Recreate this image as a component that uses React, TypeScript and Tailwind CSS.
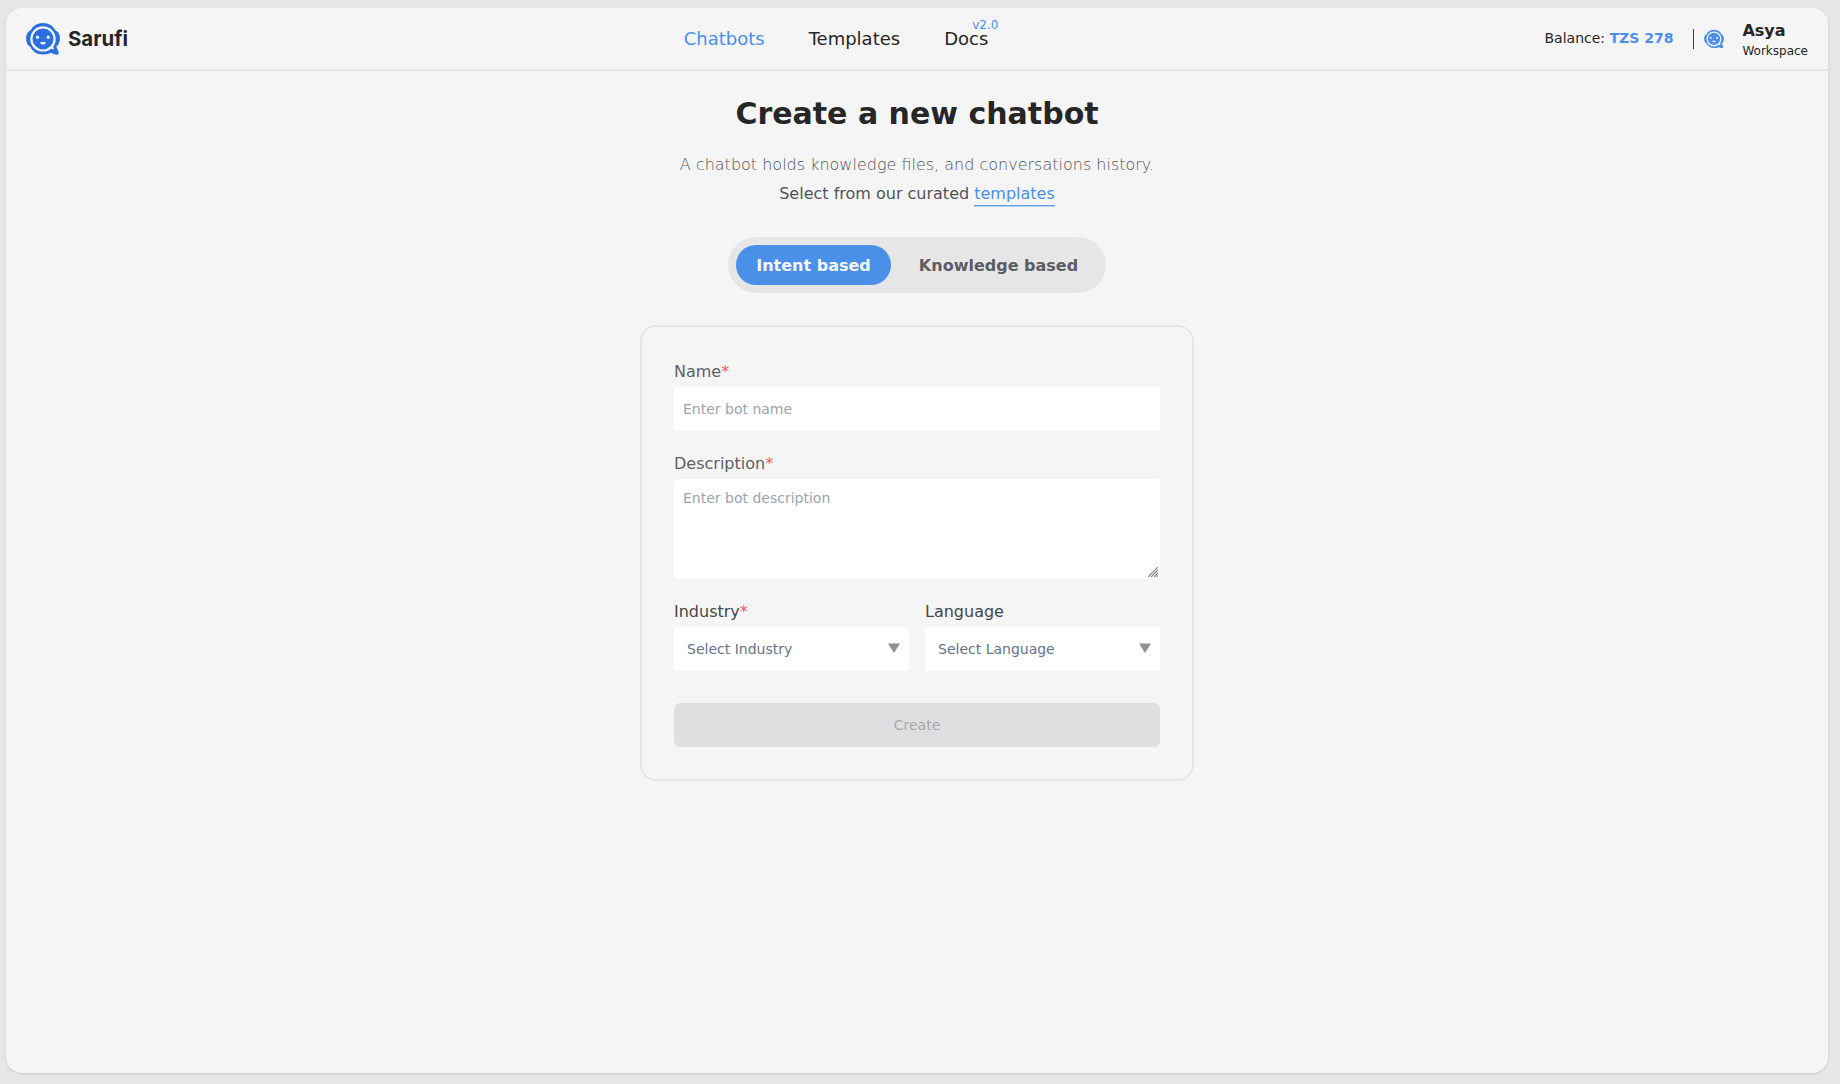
import React from 'react';

function BotLogo({ className }: { className: string }) {
  return (
    <svg viewBox="0 0 34 32" className={className} fill="none">
      <path
        d="M17 1.500C11.600 1.500 7.500 4.300 5.300 8.600C2.700 9.600 1.500 11.400 1.500 15.600C1.500 19.900 2.700 21.600 5.300 22.800C7.500 27.300 11.600 30.100 17 30.100C20.200 30.100 22.800 29.400 24.900 28.200C27 29.700 29.200 30.400 31.400 30.200C31 28.200 29.600 26 28.700 22.800C31.300 21.600 32.500 19.900 32.500 15.600C32.500 11.400 31.300 9.600 28.700 8.600C26.500 4.300 22.400 1.500 17 1.500Z"
        fill="currentColor"
        stroke="currentColor"
        strokeWidth="2.800"
        strokeLinejoin="round"
      />
      <circle cx="17" cy="15.900" r="11.600" stroke="#f5f5f5" strokeWidth="2.200" />
      <path d="M24.600 24.800l2.400-2.600c.2 1.500.6 3 1.200 4.200-1.400-.1-2.600-.6-3.600-1.600Z" fill="#f5f5f5" />
      <ellipse cx="11.500" cy="14.200" rx="1.600" ry="1.700" fill="#f5f5f5" />
      <ellipse cx="22.200" cy="14.200" rx="1.600" ry="1.700" fill="#f5f5f5" />
      <path d="M14.300 18.900h5.400c0 1.700-1.100 2.700-2.700 2.700s-2.700-1-2.700-2.700Z" fill="#f5f5f5" />
    </svg>
  );
}

function Label({ children, required, className }: { children: React.ReactNode; required?: boolean; className: string }) {
  return (
    <label className={`mb-[3px] block pt-px text-base leading-6 ${className}`}>
      {children}
      {required && <span className="text-red-500/80">*</span>}
    </label>
  );
}

function SelectBox({ text }: { text: string }) {
  return (
    <div className="flex h-11 items-center justify-between rounded bg-white pr-[9px] pl-[13px] text-sm text-[#64748b]">
      <span>{text}</span>
      <svg viewBox="0 0 12 10" className="mb-0.5 h-2.5 w-3">
        <path d="M0 .5h12L6 10Z" fill="#919191" />
      </svg>
    </div>
  );
}

export default function App() {
  return (
    <div className="h-[1084px] bg-[#e6e6e6] pt-2 pr-3 pl-1.5 font-['DejaVu_Sans',sans-serif] text-[#262626]">
      <div className="h-[1065px] rounded-2xl bg-[#f5f5f5] shadow">
        <header className="grid h-[63px] grid-cols-[1fr_auto_1fr] items-center border-b-2 border-[#e6e6e6] px-5">
          <div className="flex items-center gap-2">
            <BotLogo className="h-8 w-[34px] text-[#2b6fe0]" />
            <span className="font-['Inter',sans-serif] text-[20.4px] leading-6 font-bold">Sarufi</span>
          </div>
          <nav className="mr-[162px] flex gap-11 text-lg">
            <a className="text-[#4a90e9]">Chatbots</a>
            <a>Templates</a>
            <a className="relative">
              Docs
              <span className="absolute -top-2 left-7 text-xs leading-4 text-[#4a90e9]">v2.0</span>
            </a>
          </nav>
          <div className="flex items-center justify-end">
            <p className="mb-0.5 text-sm">
              Balance: <b className="text-[#4a90e9]">TZS 278</b>
            </p>
            <div className="ml-5 h-5 w-px bg-[#404040]" />
            <BotLogo className="ml-2.5 h-5 w-5 text-[#4a90e9]" />
            <div className="ml-[18px] pt-1">
              <div className="text-base leading-5 font-bold">Asya</div>
              <div className="text-xs leading-5">Workspace</div>
            </div>
          </div>
        </header>

        <main className="flex flex-col items-center">
          <h1 className="mt-[25px] text-3xl leading-9 font-bold">Create a new chatbot</h1>
          <p className="mt-[21px] leading-6 font-extralight text-[#52525b]">
            A chatbot holds knowledge files, and conversations history.
          </p>
          <p className="mt-[5px] leading-6 text-[#52525b]">
            Select from our curated{' '}
            <a className="border-b border-[#5a9aeb] pb-0.5 text-[#4a90e9] shadow-[0_1px_0_#b9d2f3]">templates</a>
          </p>
          <div className="mt-[31px] flex h-14 w-[378px] gap-2 rounded-full bg-[#e6e6e6] p-2 font-bold">
            <button className="h-10 w-[155px] rounded-full bg-[#4a90e9] pt-0.5 text-[#f5f5f5]">Intent based</button>
            <button className="h-10 flex-1 rounded-full pt-0.5 text-[#5c5c64]">Knowledge based</button>
          </div>

          <form className="mt-8 w-[554px] rounded-2xl border-2 border-[#e6e6e6] p-8">
            <Label required className="text-[#5f5f66]">Name</Label>
            <input
              className="block h-11 w-full rounded bg-white px-[9px] text-sm placeholder:text-[#9ca3af]"
              placeholder="Enter bot name"
            />
            <div className="mt-5">
              <Label required className="text-[#5f5f66]">Description</Label>
              <div className="relative">
                <textarea
                  className="block h-[100px] w-full resize-none rounded bg-white px-[9px] py-[9px] text-sm placeholder:text-[#9ca3af]"
                  placeholder="Enter bot description"
                />
                <svg viewBox="0 0 10 10" className="absolute right-0.5 bottom-0.5 h-2.5 w-2.5">
                  <path d="M0 10 10 0M3 10l7-7M6 10l4-4M8.500 10l1.500-1.500" stroke="#7d7d7d" strokeWidth="1.100" />
                </svg>
              </div>
            </div>
            <div className="mt-5 grid grid-cols-2 gap-4">
              <div>
                <Label required className="text-[#45454c]">Industry</Label>
                <SelectBox text="Select Industry" />
              </div>
              <div>
                <Label className="text-[#45454c]">Language</Label>
                <SelectBox text="Select Language" />
              </div>
            </div>
            <button type="button" className="mt-8 h-11 w-full rounded-md bg-[#dfdfe1] text-sm text-[#a8a8ac]">
              Create
            </button>
          </form>
        </main>
      </div>
    </div>
  );
}
